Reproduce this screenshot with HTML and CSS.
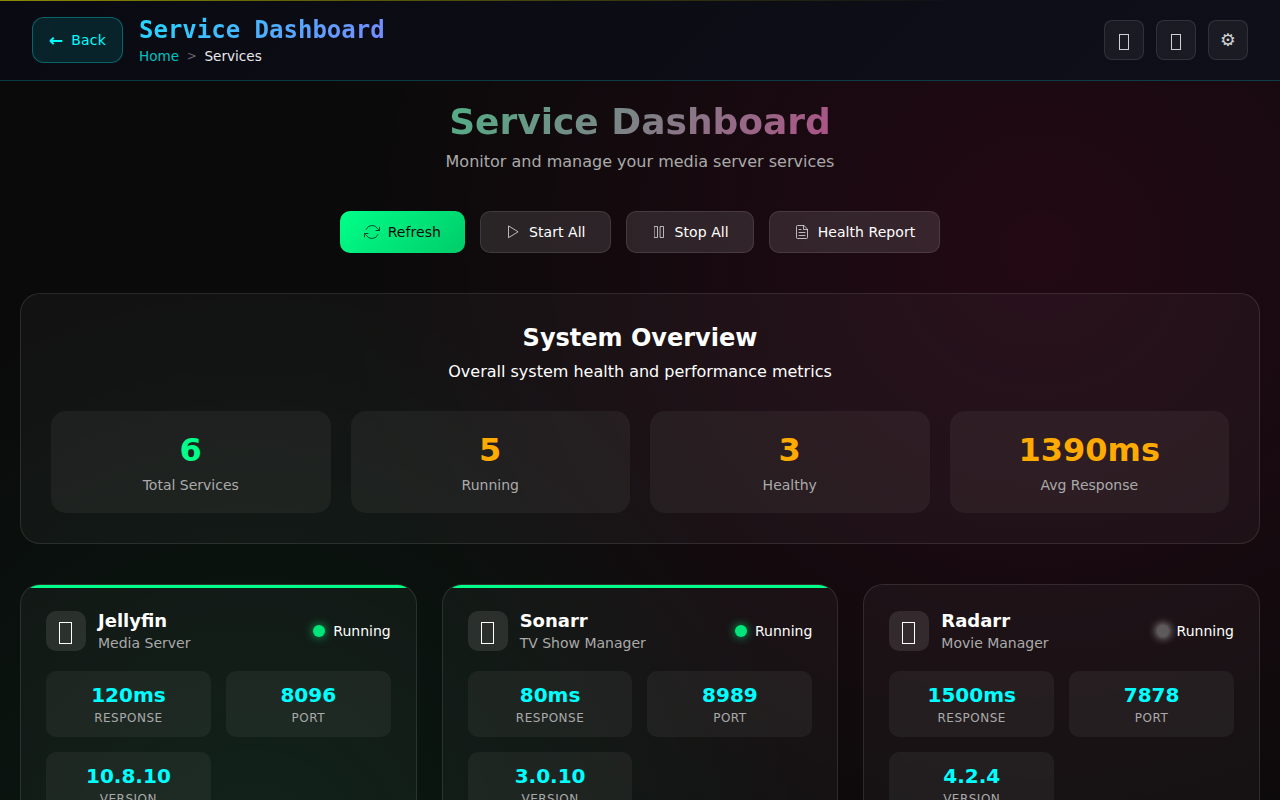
FILE: index.html
```html
<!DOCTYPE html>
<html lang="en">
<head>
<meta charset="utf-8">
<title>Service Dashboard</title>
<link rel="stylesheet" href="styles.css">
</head>
<body>
<header class="topbar">
  <div class="topbar-left">
    <a class="back"><span class="back-arrow">←</span><span>Back</span></a>
    <div class="heading">
      <div class="brand">Service Dashboard</div>
      <nav class="crumbs"><a class="crumb-link">Home</a><span class="crumb-sep">&gt;</span><span class="crumb-current">Services</span></nav>
    </div>
  </div>
  <div class="topbar-actions">
    <button class="icon-btn"><i class="tofu"></i></button>
    <button class="icon-btn"><i class="tofu"></i></button>
    <button class="icon-btn icon-gear">⚙</button>
  </div>
</header>
<main class="page">
  <section class="intro">
    <h1 class="title">Service Dashboard</h1>
    <p class="subtitle">Monitor and manage your media server services</p>
  </section>
  <div class="actions">
    <button class="btn btn-primary"><svg class="ico" viewBox="0 0 16 16"><path d="M15.500 3v3.500H12M.5 13V9.500H4M2 5.500A6.600 6.600 0 0 1 13.500 4.300L15.500 6.500M14 10.500A6.600 6.600 0 0 1 2.500 11.700L.5 9.500"/></svg>Refresh</button>
    <button class="btn"><svg class="ico" viewBox="0 0 16 16"><path d="M3.500 2.300v11.400L12.800 8z"/></svg>Start All</button>
    <button class="btn"><svg class="ico" viewBox="0 0 16 16"><path d="M3.500 2.500h3v11h-3zM9.500 2.500h3v11h-3z"/></svg>Stop All</button>
    <button class="btn"><svg class="ico" viewBox="0 0 16 16"><path d="M9.500 1.500h-6a1 1 0 0 0-1 1v11a1 1 0 0 0 1 1h9a1 1 0 0 0 1-1v-8zM9.500 1.500v4h4M5 5.500h2M5 8.500h6M5 11.500h6"/></svg>Health Report</button>
  </div>
  <section class="overview">
    <h2 class="overview-title">System Overview</h2>
    <p class="overview-text">Overall system health and performance metrics</p>
    <div class="stats">
      <div class="stat"><div class="stat-value good">6</div><div class="stat-label">Total Services</div></div>
      <div class="stat"><div class="stat-value">5</div><div class="stat-label">Running</div></div>
      <div class="stat"><div class="stat-value">3</div><div class="stat-label">Healthy</div></div>
      <div class="stat"><div class="stat-value">1390ms</div><div class="stat-label">Avg Response</div></div>
    </div>
  </section>
  <section class="services">
    <article class="card healthy">
      <div class="card-head"><div class="card-icon"><i class="tofu tofu-lg"></i></div><div class="card-names"><h3 class="card-name">Jellyfin</h3><p class="card-kind">Media Server</p></div><div class="status"><i class="dot"></i>Running</div></div>
      <div class="metrics">
        <div class="metric"><div class="metric-value">120ms</div><div class="metric-label">Response</div></div>
        <div class="metric"><div class="metric-value">8096</div><div class="metric-label">Port</div></div>
        <div class="metric"><div class="metric-value">10.8.10</div><div class="metric-label">Version</div></div>
      </div>
    </article>
    <article class="card healthy">
      <div class="card-head"><div class="card-icon"><i class="tofu tofu-lg"></i></div><div class="card-names"><h3 class="card-name">Sonarr</h3><p class="card-kind">TV Show Manager</p></div><div class="status"><i class="dot"></i>Running</div></div>
      <div class="metrics">
        <div class="metric"><div class="metric-value">80ms</div><div class="metric-label">Response</div></div>
        <div class="metric"><div class="metric-value">8989</div><div class="metric-label">Port</div></div>
        <div class="metric"><div class="metric-value">3.0.10</div><div class="metric-label">Version</div></div>
      </div>
    </article>
    <article class="card">
      <div class="card-head"><div class="card-icon"><i class="tofu tofu-lg"></i></div><div class="card-names"><h3 class="card-name">Radarr</h3><p class="card-kind">Movie Manager</p></div><div class="status"><i class="dot dot-off"></i>Running</div></div>
      <div class="metrics">
        <div class="metric"><div class="metric-value">1500ms</div><div class="metric-label">Response</div></div>
        <div class="metric"><div class="metric-value">7878</div><div class="metric-label">Port</div></div>
        <div class="metric"><div class="metric-value">4.2.4</div><div class="metric-label">Version</div></div>
      </div>
    </article>
  </section>
</main>
</body>
</html>
```
FILE: styles.css
```css
* { box-sizing: border-box; margin: 0; padding: 0; }
body {
  height: 800px;
  overflow: hidden;
  color: #fff;
  font: 16px/1.6 "DejaVu Sans", sans-serif;
  background:
    radial-gradient(ellipse 700px 680px at 1040px 250px, rgba(255, 0, 110, 0.1), transparent),
    radial-gradient(ellipse 560px 600px at 250px 880px, rgba(0, 255, 136, 0.07), transparent),
    #0a0a0a;
}
button { font: inherit; color: inherit; }

.topbar {
  position: relative;
  display: flex;
  align-items: center;
  justify-content: space-between;
  height: 81px;
  padding: 0 32px;
  background: linear-gradient(135deg, #0a0a12, #0f0f19);
  border-bottom: 1px solid rgba(0, 255, 255, 0.2);
}
.topbar::before {
  content: "";
  position: absolute;
  inset: 0 0 auto;
  height: 1px;
  background: linear-gradient(90deg, #8a8a00, transparent 75%);
}
.topbar-left { display: flex; align-items: center; gap: 16px; }
.back {
  display: flex;
  align-items: center;
  gap: 8px;
  width: 91px;
  height: 46px;
  padding: 0 16px;
  border: 1px solid rgba(0, 255, 255, 0.3);
  border-radius: 12px;
  background: rgba(0, 255, 255, 0.1);
  color: #0ff;
  font-size: 14px;
  letter-spacing: 0.2px;
}
.back-arrow { font-size: 17px; font-weight: bold; line-height: 1; letter-spacing: 0; }
.heading { padding-top: 3px; }
.brand {
  width: max-content;
  font: bold 24px/29px "DejaVu Sans Mono", monospace;
  color: transparent;
  background: linear-gradient(135deg, #22d8ff, #7888ff);
  background-clip: text;
}
.crumbs { display: flex; gap: 7.6px; font-size: 13.6px; line-height: 22px; }
.crumb-link { color: #00c2c2; }
.crumb-sep { color: #66666c; font-size: 12px; }
.crumb-current { color: #e8e8ea; }
.topbar-actions { display: flex; gap: 12px; }
.icon-btn {
  display: flex;
  align-items: center;
  justify-content: center;
  width: 40px;
  height: 40px;
  border: 1px solid rgba(255, 255, 255, 0.1);
  border-radius: 8px;
  background: rgba(255, 255, 255, 0.05);
  color: #d0d0d2;
  font-size: 17.6px;
  line-height: 1;
}
.icon-gear { padding-top: 2px; }
.tofu { display: block; width: 10px; height: 16px; margin-top: 3px; border: 1px solid #d0d0d2; }
.tofu-lg { width: 13px; height: 22px; margin: 3px 1px 0 0; border-color: #fff; }

.page { padding: 0 20px; }
.intro { text-align: center; padding-top: 12px; }
.title {
  width: max-content;
  margin: 0 auto;
  font-size: 36px;
  line-height: 58px;
  color: transparent;
  background: linear-gradient(135deg, #4fb286, #b04f86);
  background-clip: text;
}
.subtitle { line-height: 26px; margin-top: -2px; color: #aaa; }
.actions { display: flex; justify-content: center; gap: 15px; margin: 36px 0 40px; }
.btn {
  display: flex;
  align-items: center;
  gap: 8px;
  height: 42px;
  padding: 0 24px;
  border: 1px solid rgba(255, 255, 255, 0.1);
  border-radius: 10px;
  background: rgba(255, 255, 255, 0.11);
  font-size: 14px;
  letter-spacing: 0.06px;
}
.btn-primary { border: 0; background: linear-gradient(135deg, #00ff88, #00cc6a); color: #0a0a0a; }
.ico { width: 16px; height: 16px; fill: none; stroke: currentColor; stroke-width: 0.8; stroke-linejoin: round; stroke-linecap: round; opacity: 0.85; }

.overview {
  height: 251px;
  padding: 25px 30px 30px;
  border: 1px solid rgba(255, 255, 255, 0.1);
  border-radius: 20px;
  background: rgba(255, 255, 255, 0.035);
  text-align: center;
}
.overview-title { font-size: 24px; line-height: 38px; }
.overview-text { line-height: 26px; margin: 2px 0 26px; }
.stats { display: grid; grid-template-columns: repeat(4, 1fr); gap: 20px; }
.stat { height: 102px; padding: 14px 20px; border-radius: 15px; background: rgba(255, 255, 255, 0.05); }
.stat-value { font-size: 32px; line-height: 50px; font-weight: bold; color: #fa0; }
.good { color: #00ff88; }
.stat-label { font-size: 14px; line-height: 20px; color: #aaa; }

.services { display: grid; grid-template-columns: repeat(3, 1fr); gap: 25px; margin-top: 40px; }
.card {
  position: relative;
  height: 380px;
  overflow: hidden;
  padding: 25px;
  border: 1px solid rgba(255, 255, 255, 0.1);
  border-radius: 20px;
  background: rgba(255, 255, 255, 0.035);
}
.healthy::before { content: ""; position: absolute; inset: 0 0 auto; height: 3px; background: #00ff88; }
.card-head { display: flex; align-items: center; height: 42px; gap: 12px; margin-bottom: 19px; }
.card-icon {
  display: flex;
  align-items: center;
  justify-content: center;
  width: 40px;
  height: 40px;
  border-radius: 10px;
  background: rgba(255, 255, 255, 0.1);
}
.card-names { padding-top: 2px; }
.card-name { font-size: 18px; line-height: 22px; }
.card-kind { font-size: 14px; line-height: 22px; color: #aaa; }
.status { display: flex; align-items: center; gap: 8px; margin-left: auto; font-size: 14px; }
.dot { width: 12px; height: 12px; border-radius: 50%; background: #00e67a; box-shadow: 0 0 10px rgba(0, 255, 136, 0.7); }
.dot-off { background: #5e5a5c; box-shadow: 0 0 8px 1px rgba(255, 255, 255, 0.6); }
.metrics { display: grid; grid-template-columns: 1fr 1fr; gap: 15px; }
.metric { height: 66px; padding: 10px; border-radius: 10px; background: rgba(255, 255, 255, 0.05); text-align: center; }
.metric-value { font-size: 20px; line-height: 28px; font-weight: bold; color: #0ff; }
.metric-label { font-size: 12px; line-height: 18px; letter-spacing: 0.5px; text-transform: uppercase; color: #aaa; }
```
